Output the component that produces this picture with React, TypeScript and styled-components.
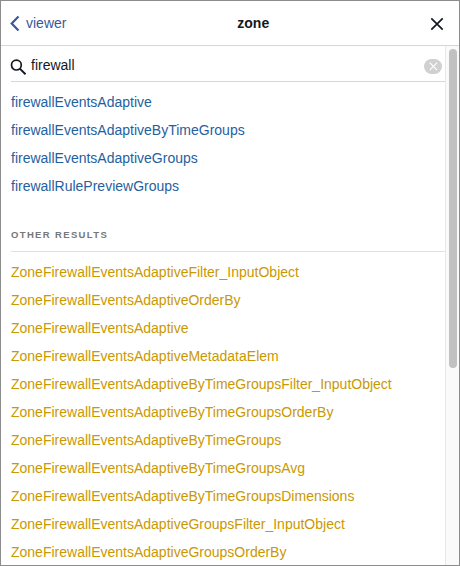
import React from "react";
import styled, { createGlobalStyle } from "styled-components";

const GlobalStyle = createGlobalStyle`
  * { box-sizing: border-box; }
  body { margin: 0; overflow: hidden; }
`;

const Panel = styled.div`
  display: flex;
  flex-direction: column;
  width: 460px;
  height: 566px;
  border: 1px solid #8c8c8c;
  background: #fff;
  overflow: hidden;
  font-family: "Liberation Sans", Arial, sans-serif;
  font-size: 14px;
  color: #141823;
`;

const TitleBar = styled.header`
  display: flex;
  align-items: center;
  gap: 10px;
  flex: none;
  height: 45px;
  padding: 0 15px 0 8px;
  border-bottom: 1px solid #d6d6d6;
`;

const BackButton = styled.button`
  display: flex;
  align-items: center;
  gap: 6px;
  padding: 0;
  border: 0;
  background: none;
  font: inherit;
  color: #3b5998;
`;

const Title = styled.h1`
  flex: 1;
  margin: 0;
  padding-left: 10px;
  font-size: 14px;
  font-weight: 700;
  text-align: center;
`;

const CloseButton = styled.button`
  display: flex;
  padding: 2px 0 0;
  border: 0;
  background: none;
`;

const Body = styled.div`
  display: flex;
  flex: 1;
  min-height: 0;
`;

const Content = styled.main`
  flex: 1;
  min-width: 0;
  padding-left: 10px;
  overflow: hidden;
`;

const SearchBox = styled.label`
  display: flex;
  align-items: center;
  height: 36px;
  padding-top: 6px;
  border-bottom: 1px solid #d3d6db;
`;

const SearchInput = styled.input`
  flex: 1;
  min-width: 0;
  margin: 0 0 3px 5px;
  padding: 0;
  border: 0;
  outline: 0;
  background: none;
  font: inherit;
  color: #141823;
`;

const ClearButton = styled.button`
  display: flex;
  align-items: center;
  justify-content: center;
  width: 18px;
  height: 15px;
  margin-right: 3px;
  padding: 0;
  border: 0;
  border-radius: 8px;
  background: #d0d0d0;
`;

const ResultList = styled.ul<{ $color: string }>`
  margin: 0;
  padding: 6px 0 0;
  list-style: none;
  color: ${(p) => p.$color};
`;

const Result = styled.li`
  height: 28px;
  line-height: 28px;
  white-space: nowrap;
`;

const SectionTitle = styled.h2`
  height: 30px;
  margin: 22px 0 0;
  border-bottom: 1px solid #e0e0e0;
  font-size: 9.5px;
  font-weight: 700;
  line-height: 26px;
  letter-spacing: 1.35px;
  color: #777;
`;

const ScrollTrack = styled.div`
  width: 14px;
  padding: 3px 0 0 3px;
  border-left: 1px solid #e8e8e8;
  background: #fafafa;
`;

const ScrollThumb = styled.div`
  width: 8px;
  height: 319px;
  border-radius: 4px;
  background: #c1c1c1;
`;

const fields = [
  "firewallEventsAdaptive",
  "firewallEventsAdaptiveByTimeGroups",
  "firewallEventsAdaptiveGroups",
  "firewallRulePreviewGroups",
];

const types = [
  "ZoneFirewallEventsAdaptiveFilter_InputObject",
  "ZoneFirewallEventsAdaptiveOrderBy",
  "ZoneFirewallEventsAdaptive",
  "ZoneFirewallEventsAdaptiveMetadataElem",
  "ZoneFirewallEventsAdaptiveByTimeGroupsFilter_InputObject",
  "ZoneFirewallEventsAdaptiveByTimeGroupsOrderBy",
  "ZoneFirewallEventsAdaptiveByTimeGroups",
  "ZoneFirewallEventsAdaptiveByTimeGroupsAvg",
  "ZoneFirewallEventsAdaptiveByTimeGroupsDimensions",
  "ZoneFirewallEventsAdaptiveGroupsFilter_InputObject",
  "ZoneFirewallEventsAdaptiveGroupsOrderBy",
];

export default function App() {
  return (
    <>
      <GlobalStyle />
      <Panel>
        <TitleBar>
          <BackButton>
            <svg width="11" height="16" viewBox="0 0 11 16" fill="none" stroke="#3b5998" strokeWidth="2.2">
              <path d="M9.5 1.5 2.7 8.5l6.8 7" />
            </svg>
            viewer
          </BackButton>
          <Title>zone</Title>
          <CloseButton aria-label="Close">
            <svg width="14" height="14" viewBox="0 0 14 14" fill="none" stroke="#141823" strokeWidth="1.7">
              <path d="M1.3 1.3l11.4 11.4M12.7 1.3L1.3 12.7" />
            </svg>
          </CloseButton>
        </TitleBar>
        <Body>
          <Content>
            <SearchBox>
              <svg width="15" height="16" viewBox="0 0 15 16" fill="none" stroke="#141823" overflow="visible">
                <circle cx="5.4" cy="6.1" r="4.9" strokeWidth="1.7" />
                <path d="M8.8 9.6l5.7 5.6" strokeWidth="2" />
              </svg>
              <SearchInput defaultValue="firewall" />
              <ClearButton aria-label="Clear">
                <svg width="9" height="9" viewBox="0 0 9 9" fill="none" stroke="#fff" strokeWidth="1.1">
                  <path d="M.7.7l7.4 7.4M8.1.7L.7 8.1" />
                </svg>
              </ClearButton>
            </SearchBox>
            <ResultList $color="#1f61a0">
              {fields.map((name) => (
                <Result key={name}>{name}</Result>
              ))}
            </ResultList>
            <SectionTitle>OTHER RESULTS</SectionTitle>
            <ResultList $color="#ca9800">
              {types.map((name) => (
                <Result key={name}>{name}</Result>
              ))}
            </ResultList>
          </Content>
          <ScrollTrack><ScrollThumb /></ScrollTrack>
        </Body>
      </Panel>
    </>
  );
}
